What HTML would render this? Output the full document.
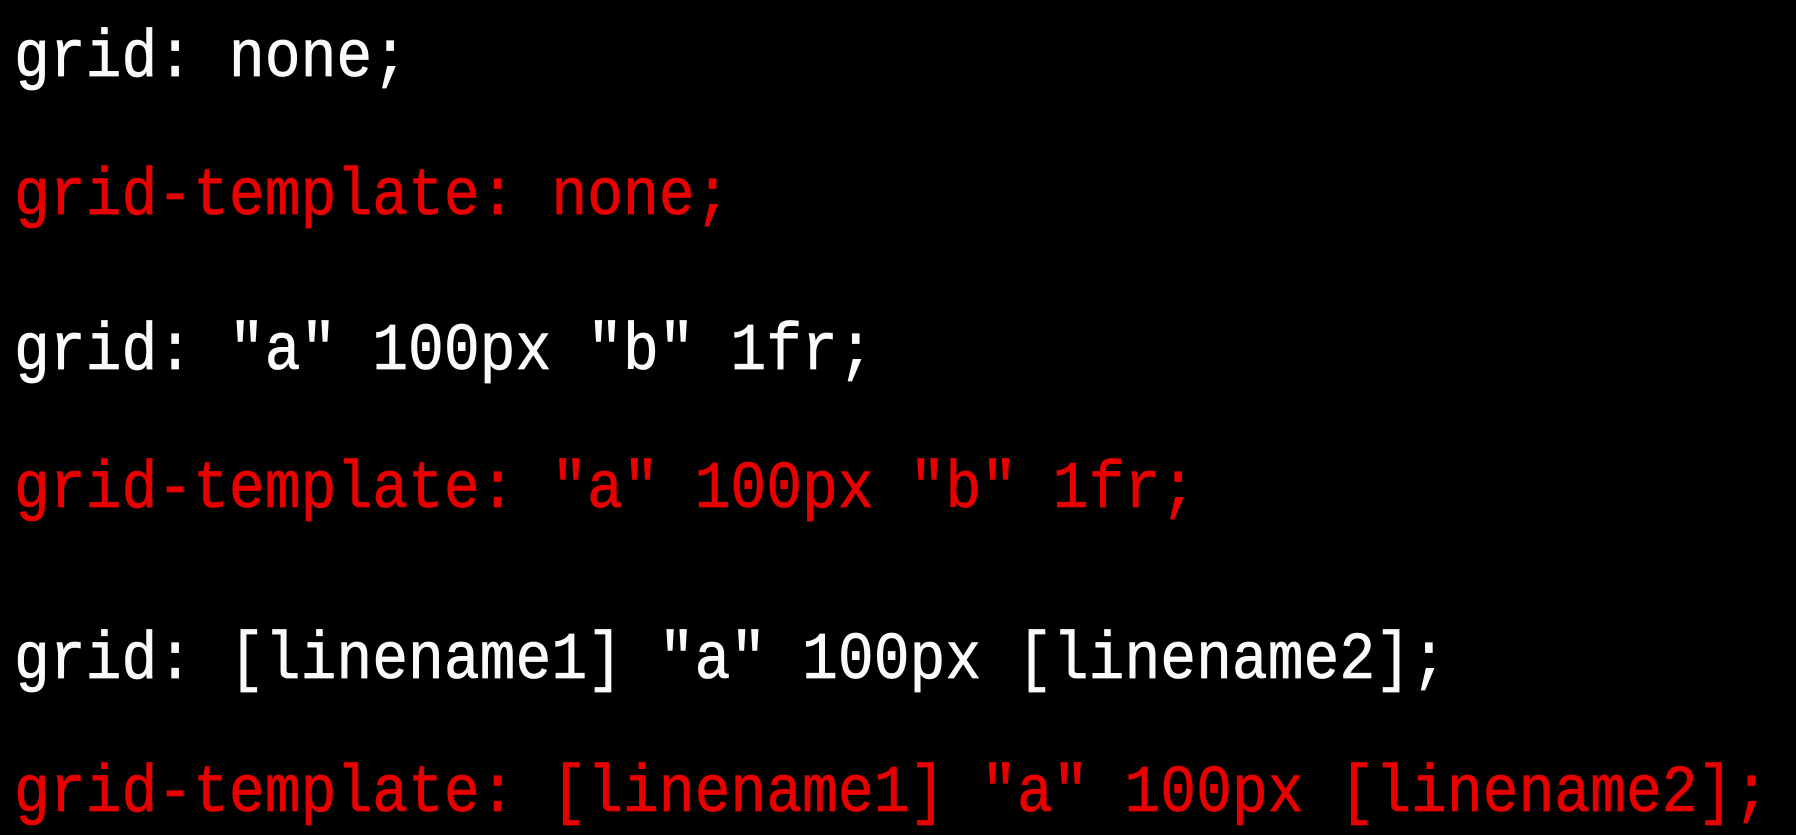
<!DOCTYPE html>
<html><head><meta charset="utf-8"><style>
html,body{margin:0;padding:0;background:#000;width:1796px;height:835px;overflow:hidden}
svg{display:block}
text{font-family:"Liberation Mono",monospace;font-size:59.7px;white-space:pre;stroke-width:0.7px}
.w{fill:#fafafa;stroke:#fafafa}.r{fill:#e80000;stroke:#e80000}
</style></head><body>
<svg width="1796" height="835" xmlns="http://www.w3.org/2000/svg">
<rect width="1796" height="835" fill="#000"/>
<g transform="translate(0,76) scale(1,1.12)"><text class="w" x="14" y="0">grid: none;</text></g>
<g transform="translate(0,214) scale(1,1.12)"><text class="r" x="14" y="0">grid-template: none;</text></g>
<g transform="translate(0,369) scale(1,1.12)"><text class="w" x="14" y="0">grid: "a" 100px "b" 1fr;</text></g>
<g transform="translate(0,507) scale(1,1.12)"><text class="r" x="14" y="0">grid-template: "a" 100px "b" 1fr;</text></g>
<g transform="translate(0,678) scale(1,1.12)"><text class="w" x="14" y="0">grid: [linename1] "a" 100px [linename2];</text></g>
<g transform="translate(0,811) scale(1,1.12)"><text class="r" x="14" y="0">grid-template: [linename1] "a" 100px [linename2];</text></g>
</svg>
</body></html>
